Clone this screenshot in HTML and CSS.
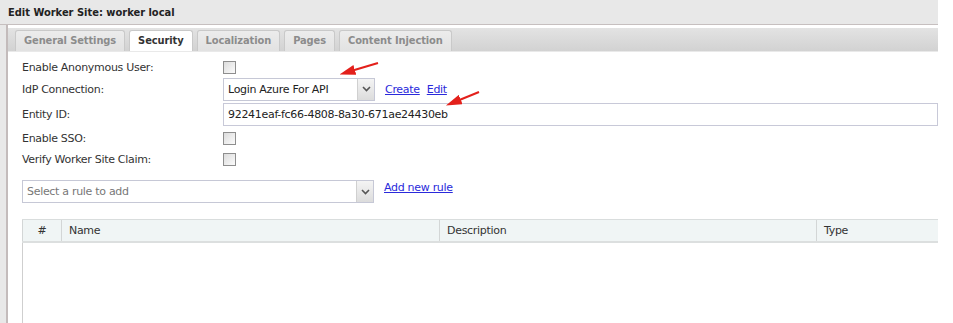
FILE: index.html
```html
<!DOCTYPE html>
<html lang="en">
<head>
    <meta charset="UTF-8">
    <title>Edit Worker Site</title>
    <link rel="stylesheet" href="styles.css">
</head>
<body>

    <div class="window">
        <div class="titlebar">Edit Worker Site: worker local</div>

        <div class="content">
            <!-- Tab strip -->
            <div class="tabstrip">
                <span class="tab">General Settings</span>
                <span class="tab active">Security</span>
                <span class="tab">Localization</span>
                <span class="tab">Pages</span>
                <span class="tab">Content Injection</span>
            </div>

            <!-- Security form -->
            <div class="form">
                <div class="row r1">
                    <label>Enable Anonymous User:</label>
                    <span class="check"></span>
                </div>
                <div class="row r2">
                    <label>IdP Connection:</label>
                    <div class="select idp">
                        <span class="select-text">Login Azure For API</span>
                        <span class="select-btn"><svg width="9" height="6" viewBox="0 0 9 6"><path d="M1 1 L4.5 4.5 L8 1" fill="none" stroke="#555" stroke-width="1.6"/></svg></span>
                    </div>
                    <a href="#" class="link">Create</a>
                    <a href="#" class="link">Edit</a>
                </div>
                <div class="row r3">
                    <label>Entity ID:</label>
                    <div class="textbox">92241eaf-fc66-4808-8a30-671ae24430eb</div>
                </div>
                <div class="row r4">
                    <label>Enable SSO:</label>
                    <span class="check"></span>
                </div>
                <div class="row r5">
                    <label>Verify Worker Site Claim:</label>
                    <span class="check"></span>
                </div>

                <!-- Rule picker -->
                <div class="rule-row">
                    <div class="select rule">
                        <span class="select-text placeholder">Select a rule to add</span>
                        <span class="select-btn"><svg width="9" height="6" viewBox="0 0 9 6"><path d="M1 1 L4.5 4.5 L8 1" fill="none" stroke="#555" stroke-width="1.6"/></svg></span>
                    </div>
                    <a href="#" class="link add-rule">Add new rule</a>
                </div>

                <!-- Rules grid -->
                <div class="grid">
                    <div class="grid-head">
                        <div class="col c-num">#</div>
                        <div class="col c-name">Name</div>
                        <div class="col c-desc">Description</div>
                        <div class="col c-type">Type</div>
                    </div>
                    <div class="grid-body"></div>
                </div>
            </div>
        </div>
    </div>

    <!-- Red annotation arrows drawn over the screenshot -->
    <svg class="arrows" width="953" height="323" viewBox="0 0 953 323">
        <defs>
            <marker id="head" markerWidth="8" markerHeight="5" refX="2" refY="2.5" orient="auto" markerUnits="strokeWidth">
                <path d="M0 0 L8 2.5 L0 5 Z" fill="#e3201b"/>
            </marker>
        </defs>
        <line x1="378" y1="63" x2="351" y2="71" stroke="#e3201b" stroke-width="2" marker-end="url(#head)"/>
        <line x1="479" y1="92" x2="457" y2="101" stroke="#e3201b" stroke-width="2" marker-end="url(#head)"/>
    </svg>

</body>
</html>
```

FILE: styles.css
```css
/* Page basics */
body {
    margin: 0;
    background-color: #fff;
    font-family: "DejaVu Sans", Verdana, sans-serif;
    font-size: 11px;
    letter-spacing: -0.3px;
    color: #333;
}

/* Outer window frame */
.window {
    width: 938px;
    height: 323px;
    background-color: #e8e8e8;
    overflow: hidden;
}

.titlebar {
    height: 25px;
    line-height: 26px;
    padding-left: 8px;
    font-family: "DejaVu Sans Condensed", "DejaVu Sans", sans-serif;
    font-weight: bold;
    font-size: 11px;
    letter-spacing: 0;
    color: #222;
    border-bottom: 1px solid #c6bfbf;
    box-sizing: border-box;
}

.content {
    margin-left: 6px;
    height: 298px;
    border-left: 2px solid #c3bbbb;
    background-color: #fff;
    padding-top: 3px;
    box-sizing: border-box;
}

/* Tabs */
.tabstrip {
    height: 24px;
    background: linear-gradient(#e3e3e3, #d2d2d2);
    border-bottom: 1px solid #e9e9e9;
    display: flex;
    align-items: flex-end;
    gap: 4px;
    padding-left: 7px;
    box-sizing: border-box;
}

.tab {
    height: 20px;
    line-height: 20px;
    padding: 0 8px;
    background: linear-gradient(#ececec, #e2e2e2);
    border: 1px solid #c9c9c9;
    border-bottom: none;
    border-radius: 3px 3px 0 0;
    font-family: "DejaVu Sans Condensed", "DejaVu Sans", sans-serif;
    font-weight: bold;
    letter-spacing: -0.1px;
    color: #8c8c8c;
}

.tab.active {
    background: #fff;
    color: #333;
}

/* Form rows */
.form {
    padding: 5px 0 0 14px;
}

.row {
    display: flex;
    align-items: center;
}

.row label {
    width: 201px;
    flex-shrink: 0;
}

.r1 { height: 20px; }
.r2 { height: 24px; }
.r3 { height: 26px; }
.r4 { height: 22px; }
.r5 { height: 20px; }

.check {
    width: 11px;
    height: 11px;
    border: 1px solid #8e8e8e;
    background: linear-gradient(135deg, #dcdcdc, #fbfbfb);
}

.select {
    display: flex;
    align-items: center;
    height: 23px;
    border: 1px solid #c6c8d6;
    box-sizing: border-box;
    background-color: #fff;
}

.select-text {
    flex: 1;
    padding-left: 4px;
    color: #222;
}

.select-text.placeholder {
    color: #777;
}

.select-btn {
    width: 16px;
    height: 21px;
    display: flex;
    align-items: center;
    justify-content: center;
    border-left: 1px solid #d0d0d0;
    background: linear-gradient(#f4f4f4, #dcdcdc);
}

.select.idp {
    width: 152px;
}

.link {
    color: #2a2adb;
    text-decoration: underline;
    margin-left: 10px;
}

.row .link + .link {
    margin-left: 7px;
}

.textbox {
    flex: 1;
    height: 23px;
    line-height: 22px;
    padding-left: 4px;
    border: 1px solid #c8c9d8;
    box-sizing: border-box;
    color: #222;
}

/* Rule picker */
.rule-row {
    display: flex;
    align-items: flex-start;
    margin-top: 11px;
}

.select.rule {
    width: 352px;
}

.add-rule {
    margin-top: 1px;
}

/* Rules grid */
.grid {
    margin-top: 16px;
}

.grid-head {
    display: flex;
    height: 24px;
    background-color: #f0f5f5;
    border-top: 1px solid #d9dddd;
    border-bottom: 2px solid #dcdfdf;
    box-sizing: border-box;
}

.col {
    line-height: 21px;
    padding-left: 7px;
    border-right: 1px solid #d3d6d6;
    box-sizing: border-box;
    color: #333;
}

.c-num { width: 40px; text-align: center; padding-left: 0; border-left: 1px solid #d3d6d6; }
.c-name { width: 378px; }
.c-desc { width: 377px; }
.c-type { flex: 1; border-right: none; }

.grid-body {
    height: 90px;
    border-left: 1px solid #cfcfcf;
}

/* Annotation overlay */
.arrows {
    position: absolute;
    left: 0;
    top: 0;
    pointer-events: none;
}
```
